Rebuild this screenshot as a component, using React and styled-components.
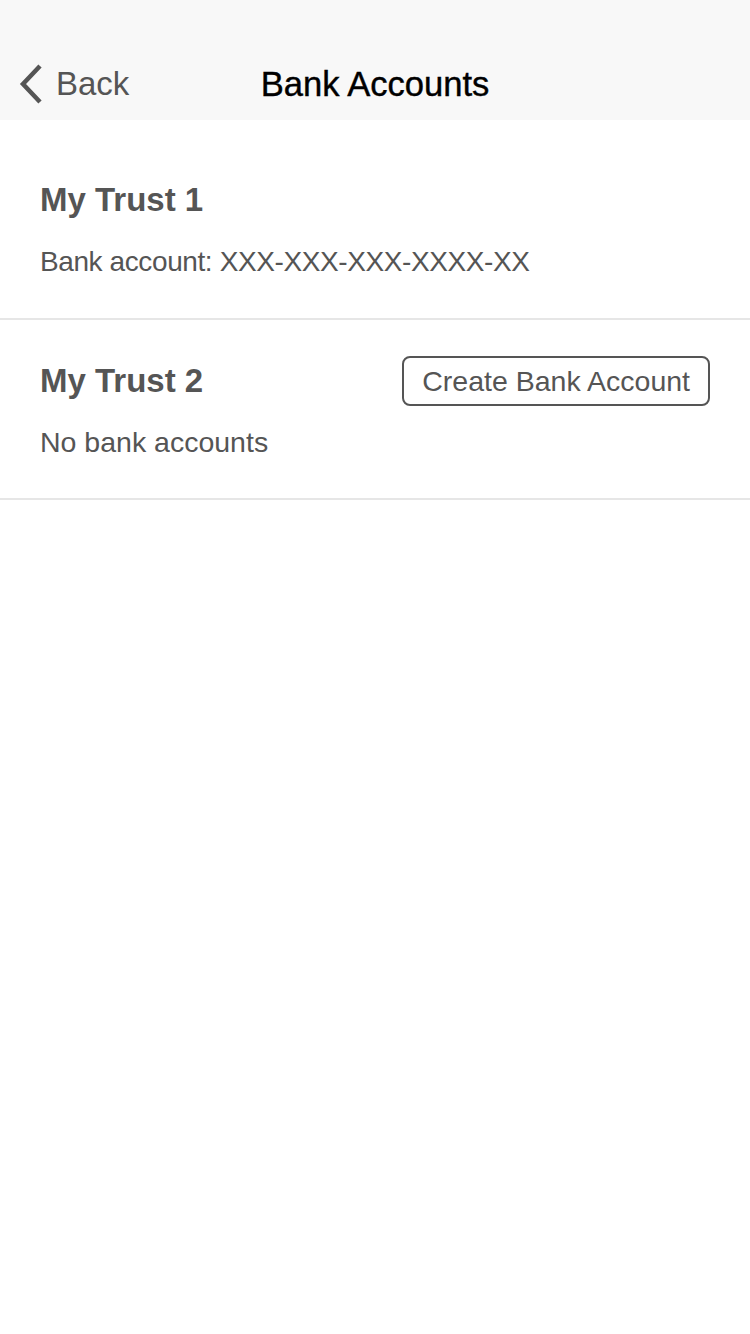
import React from "react";
import styled, { createGlobalStyle } from "styled-components";

const Global = createGlobalStyle`
  html, body { margin: 0; padding: 0; background: #ffffff; }
  body { font-family: "Liberation Sans", Arial, sans-serif; }
  * { box-sizing: border-box; }
`;

const Page = styled.div`
  width: 750px;
  min-height: 1334px;
  background: #ffffff;
`;

const NavBar = styled.header`
  height: 120px;
  background: #f8f8f8;
  padding-top: 48px;
  display: grid;
  grid-template-columns: 1fr auto 1fr;
  align-items: center;
`;

const BackButton = styled.button`
  display: flex;
  align-items: center;
  gap: 12px;
  border: none;
  background: none;
  padding: 0 0 0 18px;
  font-family: inherit;
  font-size: 33px;
  color: #555555;
  justify-self: start;
  cursor: pointer;
`;

const Title = styled.h1`
  margin: 0;
  font-size: 34.6px;
  font-weight: 400;
  color: #000000;
  -webkit-text-stroke: 0.4px #000;
`;

const List = styled.main`
  padding-top: 20px;
`;

const Section = styled.section`
  padding: 36px 40px 36px 40px;
  border-bottom: 2px solid #e6e6e6;
  &:first-child {
    padding-top: 40px;
  }
`;

const Row = styled.div`
  display: flex;
  align-items: center;
  justify-content: space-between;
  min-height: ${(p) => (p.$tall ? "50px" : "40px")};
`;

const TrustName = styled.h2`
  margin: 0;
  font-size: 33px;
  line-height: 40px;
  font-weight: 700;
  color: #555555;
`;

const Info = styled.p`
  margin: ${(p) => (p.$gap ? p.$gap : "22px")} 0 0 0;
  font-size: ${(p) => (p.$size ? p.$size : "28.5px")};
  letter-spacing: ${(p) => (p.$tight ? "-0.4px" : "0")};
  line-height: 40px;
  color: #555555;
`;

const OutlineButton = styled.button`
  height: 50px;
  padding: 0 18px;
  border: 2px solid #555555;
  border-radius: 8px;
  background: #ffffff;
  font-family: inherit;
  font-size: 28.5px;
  color: #555555;
  cursor: pointer;
`;

const Chevron = () => (
  <svg width="26" height="42" viewBox="0 0 26 42" fill="none">
    <path d="M22 3 L5 21 L22 39" stroke="#555555" strokeWidth="4.5" strokeLinecap="butt" strokeLinejoin="miter" />
  </svg>
);

export default function App() {
  return (
    <Page>
      <Global />
      <NavBar>
        <BackButton>
          <Chevron />
          Back
        </BackButton>
        <Title>Bank Accounts</Title>
        <div />
      </NavBar>
      <List>
        <Section>
          <Row>
            <TrustName>My Trust 1</TrustName>
          </Row>
          <Info $size="28px" $tight>Bank account: XXX-XXX-XXX-XXXX-XX</Info>
        </Section>
        <Section>
          <Row $tall>
            <TrustName>My Trust 2</TrustName>
            <OutlineButton>Create Bank Account</OutlineButton>
          </Row>
          <Info $gap="16px">No bank accounts</Info>
        </Section>
      </List>
    </Page>
  );
}
